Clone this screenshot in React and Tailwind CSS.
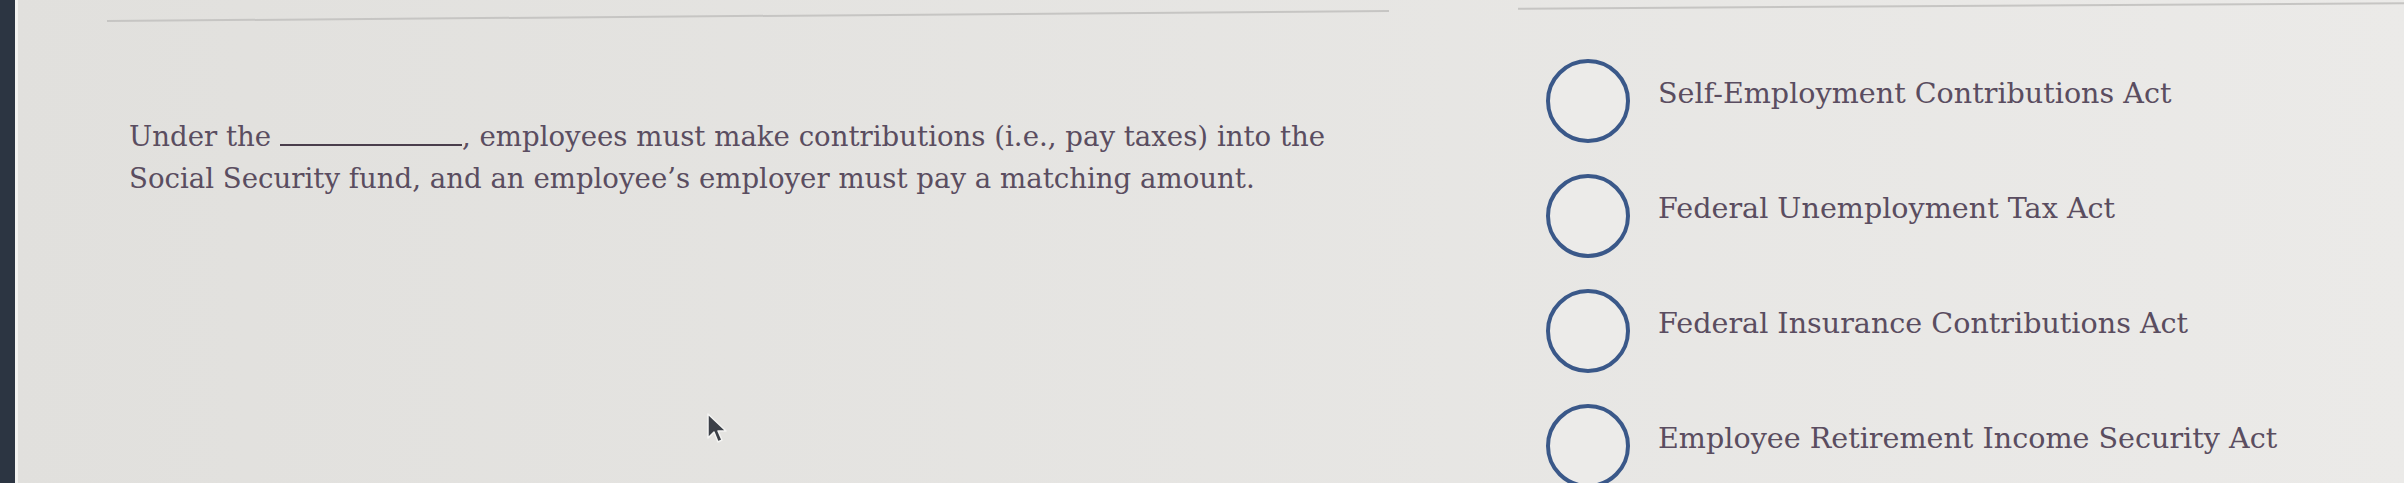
import React from 'react';

const options = [
  'Self-Employment Contributions Act',
  'Federal Unemployment Tax Act',
  'Federal Insurance Contributions Act',
  'Employee Retirement Income Security Act',
];

const serif = { fontFamily: '"DejaVu Serif", "Liberation Serif", serif' };

const Cursor = () => (
  <svg className="absolute left-[706px] top-[412px]" width="22" height="32" viewBox="0 0 22 32">
    <path d="M2 2 L2 26 L8 20 L12 30 L16 28 L12 19 L20 19 Z" fill="#3b3f47" stroke="#f4f4f2" strokeWidth="1.5" strokeLinejoin="round" />
  </svg>
);

const App = () => {
  return (
    <div className="relative flex w-[2404px] h-[483px] overflow-hidden bg-linear-to-r from-[#e1e0dd] to-[#ebeae8]">
      <div className="w-[15px] shrink-0 bg-[#2c3542]"></div>
      <div className="w-[3px] shrink-0 bg-[#f2f2f0]"></div>

      {/* question */}
      <section className="w-[1500px] shrink-0 pl-[89px]">
        <div className="w-[1282px] h-[2px] mt-[15px] bg-[#c6c5c3] -rotate-[0.45deg]"></div>
        <p
          className="pl-[22px] pt-[99px] text-[27.6px] leading-[42px] text-[#5a4d60]"
          style={serif}
        >
          Under the <span className="inline-block w-[182px] border-b-2 border-[#4a3e4c] align-baseline"></span>, employees must make contributions (i.e., pay taxes) into the
          <br />
          Social Security fund, and an employee’s employer must pay a matching amount.
        </p>
      </section>

      {/* answers */}
      <section className="flex-1">
        <div className="h-[2px] mt-[5px] bg-[#c6c5c3] -rotate-[0.35deg]"></div>
        <ul className="flex flex-col gap-[31px] pt-[52px] pl-[28px]">
          {options.map((opt) => (
            <li key={opt} className="flex items-center gap-[28px]">
              <span className="w-[84px] h-[84px] shrink-0 rounded-full border-[4px] border-[#3a5889] bg-[#ecebe9]"></span>
              <span className="pb-[16px] text-[28.6px] text-[#5a4d60] whitespace-nowrap" style={serif}>
                {opt}
              </span>
            </li>
          ))}
        </ul>
      </section>

      <Cursor />
    </div>
  );
};

export default App;
